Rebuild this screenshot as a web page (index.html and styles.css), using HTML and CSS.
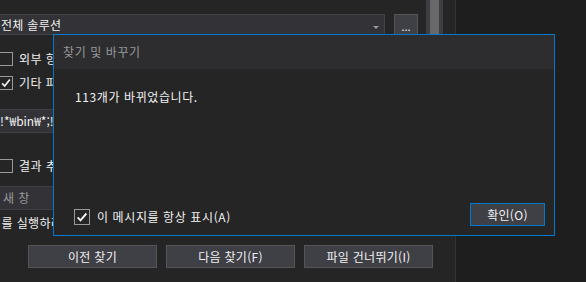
FILE: index.html
```html
<!DOCTYPE html>
<html lang="ko">
<head>
<meta charset="utf-8">
<title>찾기 및 바꾸기</title>
<link rel="stylesheet" href="styles.css">
</head>
<body>
<div class="window">
  <div class="main">
    <div class="scroll-area">
      <div class="form">
        <div class="combo-row">
          <div class="combo"><span class="combo-text">전체 솔루션</span><span class="combo-arrow"></span></div>
          <div class="browse">...</div>
        </div>
        <div class="check-row first"><span class="box"></span><span class="label">외부 항목 포함</span></div>
        <div class="check-row second"><span class="box"><svg viewBox="0 0 14 14" width="12" height="12"><path d="M2.5 7.5 L5.5 10.5 L11.5 3" fill="none" stroke="#f1f1f1" stroke-width="2"/></svg></span><span class="label">기타 파일 포함</span></div>
        <div class="textbox filter">!*₩bin₩*;!*₩obj₩*;!*₩.*₩*</div>
        <div class="check-row third"><span class="box"></span><span class="label">결과 추가</span></div>
        <div class="textbox newwin">새 창</div>
        <div class="hint">기를 실행하려면</div>
      </div>
      <div class="vscroll"><div class="thumb"></div></div>
    </div>
    <div class="buttons">
      <div class="btn">이전 찾기</div>
      <div class="btn">다음 찾기(F)</div>
      <div class="btn">파일 건너뛰기(I)</div>
    </div>
  </div>
  <div class="side"></div>
</div>

<div class="dialog">
  <div class="dialog-title">찾기 및 바꾸기</div>
  <div class="dialog-body">
    <div class="message">113개가 바뀌었습니다.</div>
    <div class="dialog-footer">
      <div class="dcheck"><span class="dbox"><svg viewBox="0 0 16 16" width="14" height="14"><path d="M3 8.5 L6.3 11.8 L13 4" fill="none" stroke="#f1f1f1" stroke-width="2.2"/></svg></span><span class="dlabel">이 메시지를 항상 표시(A)</span></div>
      <div class="ok">확인(O)</div>
    </div>
  </div>
</div>
</body>
</html>
```
FILE: styles.css
```css
* { box-sizing: border-box; }
html, body { margin: 0; padding: 0; }
body {
  width: 586px;
  height: 282px;
  overflow: hidden;
  background: #252526;
  color: #f1f1f1;
  font-family: "Noto Sans CJK KR", "Noto Sans", sans-serif;
  font-size: 12px;
  line-height: 16px;
  position: relative;
}
.window { display: flex; height: 282px; }
.main { width: 455px; display: flex; flex-direction: column; }
.scroll-area { display: flex; height: 236px; padding-right: 12px; }
.form { flex: 1; overflow: hidden; padding-top: 14px; }
.vscroll { width: 17px; height: 150px; background: #3e3e42; padding: 0 4px; }
.thumb { width: 9px; height: 90px; background: #686868; }

.combo-row { display: flex; height: 21px; }
.combo {
  width: 392px;
  margin-left: -7px;
  background: #333337;
  border: 1px solid #434346;
  display: flex; align-items: center; justify-content: space-between;
  padding: 0 5px 0 7px;
}
.combo-text { line-height: 18px; letter-spacing: 0.3px; }
.combo-arrow {
  width: 0; height: 0;
  border-left: 3px solid transparent;
  border-right: 3px solid transparent;
  border-top: 3px solid #999;
  margin-top: 6px;
}
.browse {
  width: 24px; margin-left: 9px;
  background: #3f3f46; border: 1px solid #555;
  text-align: center; line-height: 22px; font-size: 11px; overflow: hidden;
}
.check-row { display: flex; align-items: center; height: 14px; }
.check-row.first { margin-top: 17px; }
.check-row.second { margin-top: 10px; }
.check-row.third { margin-top: 26px; }
.box {
  width: 14px; height: 14px; margin-left: -1px;
  border: 1px solid #999;
  display: flex; align-items: center; justify-content: center;
}
.label { margin-left: 6px; white-space: nowrap; letter-spacing: 0.4px; }
.textbox {
  height: 24px; background: #333337; border: 1px solid #3f3f46;
  margin-left: -6px; padding-left: 5px; line-height: 22px; white-space: nowrap;
}
.textbox.filter { margin-top: 19px; }
.textbox.newwin { margin-top: 13px; color: #999; padding-left: 8px; letter-spacing: 0.4px; }
.hint { margin-top: 5px; margin-left: -10px; white-space: nowrap; letter-spacing: 0.4px; }

.buttons { display: flex; gap: 9px; padding-left: 28px; margin-top: 9px; }
.btn {
  width: 129px; height: 23px;
  background: #3f3f46; border: 1px solid #555;
  text-align: center; line-height: 21px; letter-spacing: 0.3px;
}
.side { flex: 1; background: #1e1e1e; border-left: 1px solid #333337; }

.dialog {
  position: absolute; left: 53px; top: 34px;
  width: 502px; height: 202px;
  border: 1px solid #007acc;
  background: #252526;
  display: flex; flex-direction: column;
  letter-spacing: 0.6px;
}
.dialog-title {
  height: 34px; background: #2d2d30; color: #999;
  padding-left: 9px; line-height: 34px;
}
.dialog-body { flex: 1; display: flex; flex-direction: column; padding: 0 9px 9px 20px; }
.message { margin-top: 20px; line-height: 16px; padding-left: 1px; }
.dialog-footer { margin-top: auto; display: flex; justify-content: space-between; align-items: flex-end; }
.dcheck { display: flex; align-items: center; margin-bottom: 1px; }
.dbox {
  width: 16px; height: 16px; border: 1px solid #999;
  display: flex; align-items: center; justify-content: center;
}
.dlabel { margin-left: 7px; }
.ok {
  width: 75px; height: 23px;
  background: #3f3f46; border: 1px solid #007acc;
  text-align: center; line-height: 21px; letter-spacing: 0.3px;
}
```
